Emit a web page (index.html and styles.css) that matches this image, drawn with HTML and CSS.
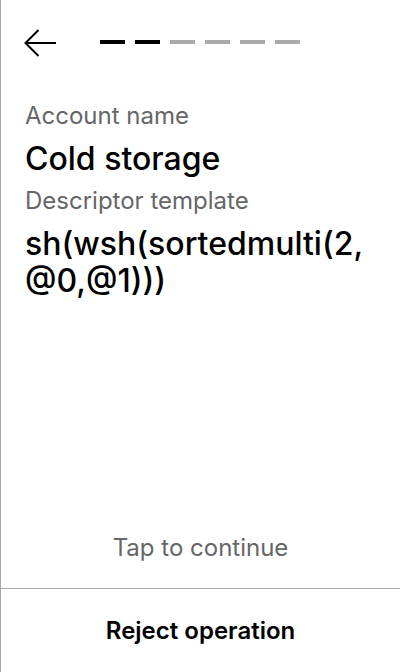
FILE: index.html
```html
<!DOCTYPE html>
<html>
<head>
<meta charset="utf-8">
<link rel="stylesheet" href="styles.css">
</head>
<body>
<div class="screen">
  <header class="top">
    <svg class="back" width="32" height="28" viewBox="0 0 32 28" fill="none" stroke="#000" stroke-width="2">
      <path d="M1.5 14 H32 M14.5 1 L1.5 14 L14.5 27"/>
    </svg>
    <div class="steps">
      <span class="dash on"></span>
      <span class="dash on"></span>
      <span class="dash"></span>
      <span class="dash"></span>
      <span class="dash"></span>
      <span class="dash"></span>
    </div>
  </header>
  <main class="content">
    <div class="label">Account name</div>
    <div class="value">Cold storage</div>
    <div class="label">Descriptor template</div>
    <div class="value">sh(wsh(sortedmulti(2,<wbr>@0,@1)))</div>
  </main>
  <div class="tap">Tap to continue</div>
  <footer class="footer">Reject operation</footer>
</div>
</body>
</html>
```

FILE: styles.css
```css
html, body {
  margin: 0;
  padding: 0;
  background: #fff;
}
.screen {
  width: 400px;
  height: 672px;
  box-sizing: border-box;
  border-left: 1px solid #aaa;
  display: flex;
  flex-direction: column;
  font-family: Inter, "Noto Sans", sans-serif;
  color: #000;
}
.top {
  display: flex;
  align-items: center;
  padding: 29px 0 0 23px;
  gap: 44px;
}
.back {
  display: block;
}
.steps {
  display: flex;
  gap: 10px;
  margin-top: -2px;
}
.dash {
  width: 25px;
  height: 4px;
  background: #aaa;
}
.dash.on {
  background: #000;
}
.content {
  padding: 45px 24px 0 24px;
  flex: 1;
}
.label {
  font-size: 24px;
  line-height: 28px;
  color: #666;
  margin-bottom: 10px;
}
.value {
  font-size: 32px;
  line-height: 37px;
  font-weight: 500;
  margin-bottom: 10px;
}
.tap {
  text-align: center;
  font-size: 24px;
  line-height: 28px;
  color: #666;
  padding-bottom: 26px;
}
.footer {
  height: 84px;
  box-sizing: border-box;
  border-top: 1px solid #aaa;
  display: flex;
  align-items: center;
  justify-content: center;
  font-size: 24px;
  font-weight: 600;
}
```
